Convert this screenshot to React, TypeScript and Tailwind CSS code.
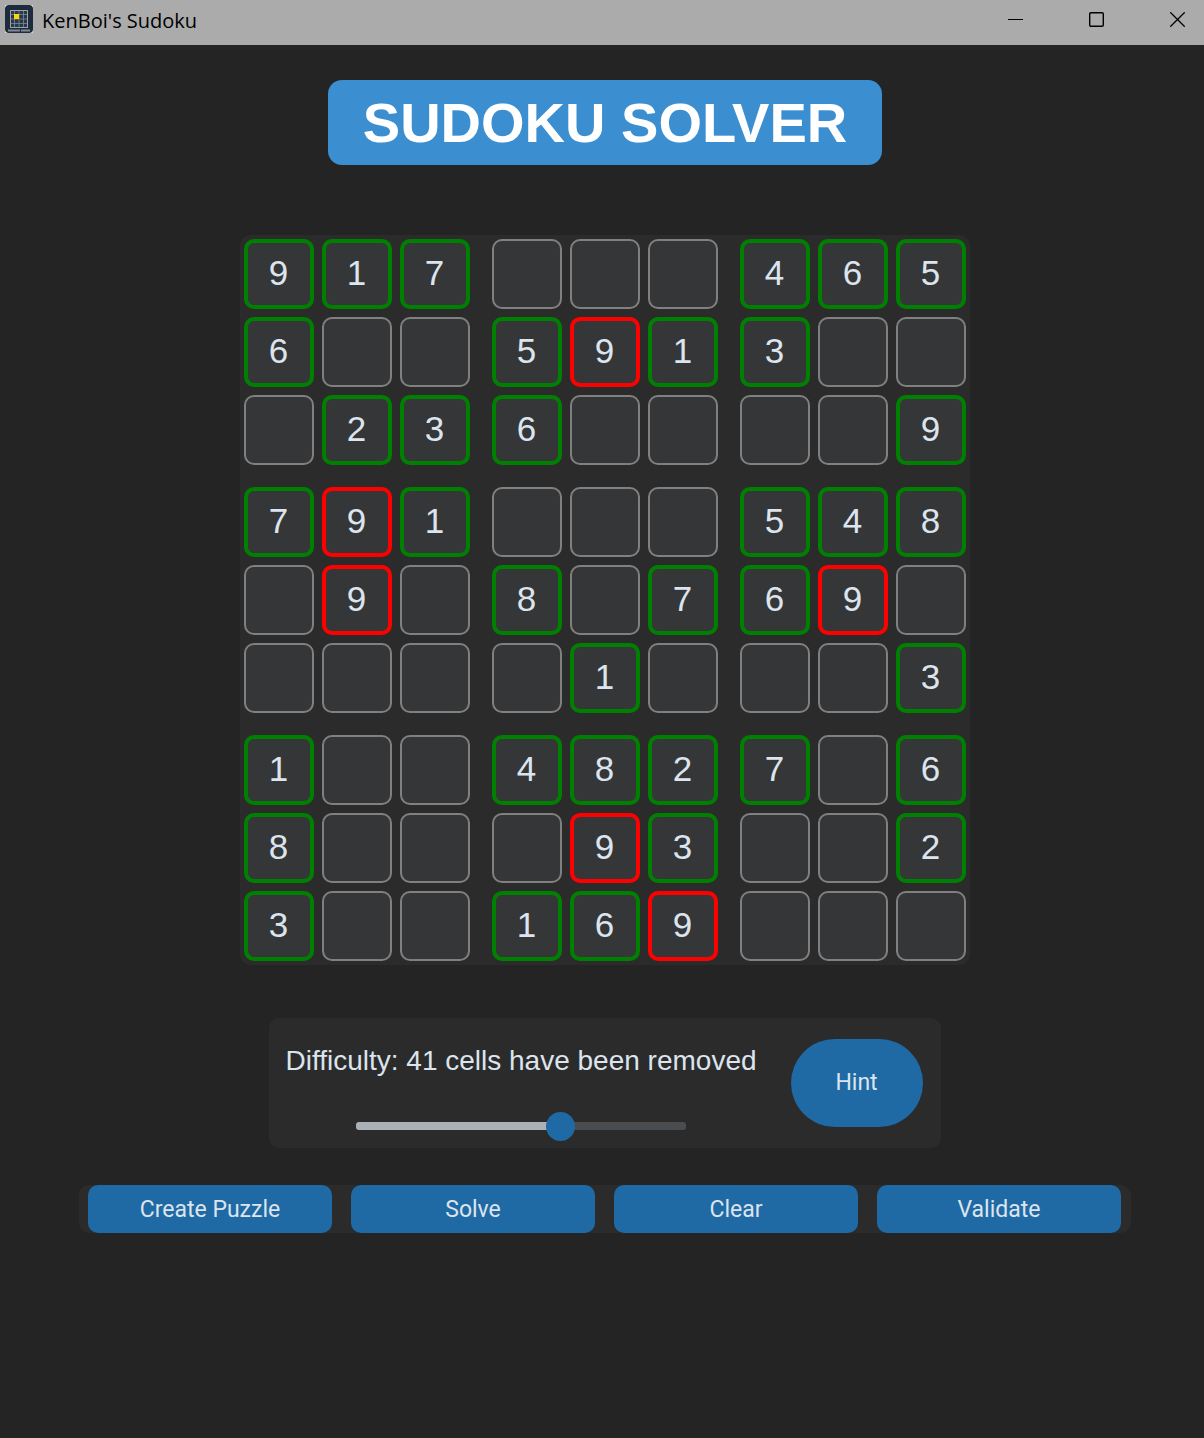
import { useState } from "react";

type Mark = "given" | "conflict" | "empty";

const START = [
  "917...465",
  "6..5913..",
  ".236....9",
  "791...548",
  ".9.8.769.",
  "....1...3",
  "1..4827.6",
  "8...93..2",
  "3..169...",
];

const CONFLICTS = new Set(["1-4", "3-1", "4-1", "4-7", "7-4", "8-5"]);

const MARK_STYLES: Record<Mark, string> = {
  given: "border-4 border-[#008000]",
  conflict: "border-4 border-[#ff0000]",
  empty: "border-2 border-[#808080]",
};

const THIRDS = [0, 1, 2];
const MAX_REMOVED = 65;

function AppIcon() {
  return (
    <svg className="size-7" viewBox="0 0 28 28" aria-hidden="true">
      <rect width="28" height="28" rx="1" fill="#e8ecf0" />
      <rect width="28" height="28" rx="4" fill="#1e2b3a" />
      <rect x="5.5" y="5.5" width="17" height="17" fill="#26384a" stroke="#9aa3ac" />
      <path
        d="M9.5 6v16M14 6v16M18.5 6v16M6 9.5h16M6 14h16M6 18.5h16"
        stroke="#7d8995"
        strokeWidth="0.8"
      />
      <rect x="9" y="9" width="5" height="5" fill="#ffd500" />
      <path d="M3 25.5h22" stroke="#7f8a96" strokeWidth="2" strokeDasharray="12 1" />
    </svg>
  );
}

function TitleBar() {
  return (
    <header className="flex h-[45px] items-start justify-between bg-[#ababab] text-black">
      <div className="flex h-[38px] items-center gap-[9px] pl-[5px]">
        <AppIcon />
        <span className="pt-[3px] font-['Open_Sans',sans-serif] text-[20px] leading-7">KenBoi's Sudoku</span>
      </div>
      <div className="flex h-[39px]">
        <button type="button" aria-label="Minimize" className="flex w-[81px] items-center justify-center">
          <svg width="15" height="15" viewBox="0 0 15 15" fill="none" stroke="currentColor">
            <path d="M0 7.5h15" />
          </svg>
        </button>
        <button type="button" aria-label="Maximize" className="flex w-[81px] items-center justify-center">
          <svg width="15" height="15" viewBox="0 0 15 15" fill="none" stroke="currentColor" strokeWidth="1.4">
            <rect x="0.7" y="0.7" width="13.6" height="13.6" rx="1.2" />
          </svg>
        </button>
        <button type="button" aria-label="Close" className="flex w-[67px] items-center justify-end pr-[19px]">
          <svg width="15" height="15" viewBox="0 0 15 15" fill="none" stroke="currentColor" strokeWidth="1.3">
            <path d="M0.3 0.3l14.4 14.4M14.7 0.3L0.3 14.7" />
          </svg>
        </button>
      </div>
    </header>
  );
}

function Cell({ row, col, value, mark }: { row: number; col: number; value: string; mark: Mark }) {
  return (
    <input
      type="text"
      inputMode="numeric"
      maxLength={1}
      defaultValue={value}
      aria-label={`Row ${row + 1}, column ${col + 1}`}
      className={`size-[70px] rounded-[10px] bg-[#343638] pr-px pb-0.5 text-center text-[35px] text-[#dce4ee] outline-none ${MARK_STYLES[mark]}`}
    />
  );
}

function Board() {
  return (
    <section aria-label="Sudoku board" className="grid grid-cols-3 gap-[22px] rounded-[10px] bg-[#2b2b2b] p-1">
      {THIRDS.map((boxRow) =>
        THIRDS.map((boxCol) => (
          <div key={`${boxRow}-${boxCol}`} className="grid grid-cols-3 gap-2">
            {THIRDS.map((r) =>
              THIRDS.map((c) => {
                const row = boxRow * 3 + r;
                const col = boxCol * 3 + c;
                const digit = START[row][col];
                const empty = digit === ".";
                const key = `${row}-${col}`;
                const mark: Mark = empty ? "empty" : CONFLICTS.has(key) ? "conflict" : "given";
                return <Cell key={key} row={row} col={col} value={empty ? "" : digit} mark={mark} />;
              }),
            )}
          </div>
        )),
      )}
    </section>
  );
}

function Difficulty() {
  const [removed, setRemoved] = useState(41);
  const filled = (removed / MAX_REMOVED) * 100;
  return (
    <section className="mt-[53px] flex h-[130px] items-center gap-[34px] rounded-[10px] bg-[#2b2b2b] pr-[18px] pl-4">
      <div className="flex flex-col items-center gap-[43px] pt-[7px]">
        <label htmlFor="difficulty" className="text-[28px] leading-9 whitespace-nowrap">
          Difficulty: {removed} cells have been removed
        </label>
        <input
          id="difficulty"
          type="range"
          min={0}
          max={MAX_REMOVED}
          value={removed}
          onChange={(e) => setRemoved(Number(e.target.value))}
          style={{
            backgroundImage: `linear-gradient(to right, #aab0b5 ${filled}%, #4a4d50 ${filled}%)`,
          }}
          className="h-2 w-[330px] appearance-none rounded-[3px] outline-none [&::-webkit-slider-thumb]:size-[29px] [&::-webkit-slider-thumb]:appearance-none [&::-webkit-slider-thumb]:rounded-full [&::-webkit-slider-thumb]:bg-[#1f6aa5]"
        />
      </div>
      <button
        type="button"
        className="h-[88px] w-[132px] rounded-full bg-[#1f6aa5] font-[Roboto,sans-serif] text-[23px] hover:bg-[#144870]"
      >
        Hint
      </button>
    </section>
  );
}

const ACTIONS = ["Create Puzzle", "Solve", "Clear", "Validate"];

export default function App() {
  return (
    <div className="flex min-h-screen flex-col bg-[#242424] font-['Liberation_Sans',Arial,sans-serif] text-[#dce4ee]">
      <TitleBar />
      <main className="flex flex-col items-center pt-[35px] pl-1.5">
        <h1 className="mb-[70px] rounded-[14px] bg-[#3b8ed0] px-[35px] text-[56px] leading-[85px] font-bold text-white">
          SUDOKU SOLVER
        </h1>
        <Board />
        <Difficulty />
        <div className="mt-[37px] flex gap-[19px] rounded-[10px] bg-[#2b2b2b] pr-2.5 pl-[9px]">
          {ACTIONS.map((action) => (
            <button
              key={action}
              type="button"
              className="h-12 w-[244px] rounded-[10px] bg-[#1f6aa5] pt-0.5 font-[Roboto,sans-serif] text-[23px] hover:bg-[#144870]"
            >
              {action}
            </button>
          ))}
        </div>
      </main>
    </div>
  );
}
